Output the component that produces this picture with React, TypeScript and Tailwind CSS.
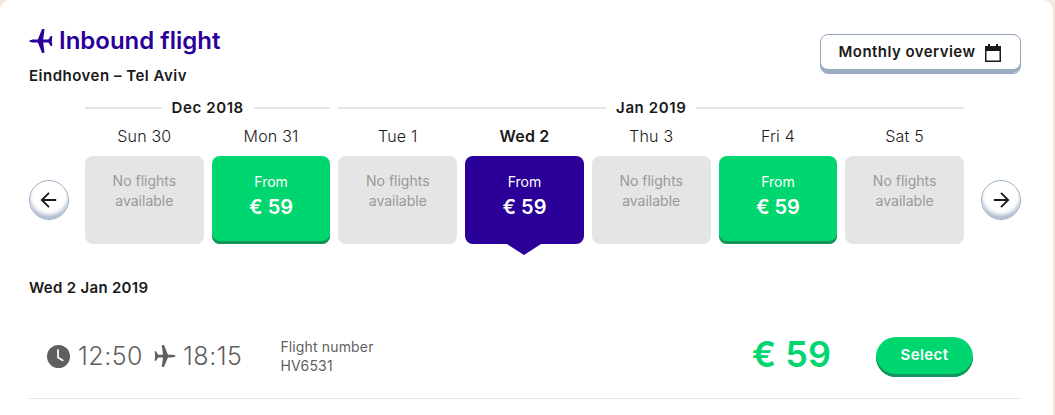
import React from 'react';

type Day = {
  label: string;
  kind: 'none' | 'open' | 'active';
};

const days: Day[] = [
  { label: 'Sun 30', kind: 'none' },
  { label: 'Mon 31', kind: 'open' },
  { label: 'Tue 1', kind: 'none' },
  { label: 'Wed 2', kind: 'active' },
  { label: 'Thu 3', kind: 'none' },
  { label: 'Fri 4', kind: 'open' },
  { label: 'Sat 5', kind: 'none' },
];

const PlaneIcon: React.FC<{ className: string }> = ({ className }) => (
  <svg viewBox="0 0 24 24" className={className} fill="currentColor">
    <path d="M0 12c1-1 3-1.500 5-1.500h3.800L13 .2c.2-.3 2.300-.3 2.500.2l-1.300 10.100h5.300l2.200-3.600h1.600L22.800 12l.5 5.100h-1.600l-2.200-3.600h-5.300l1.300 10.100c-.2.5-2.300.5-2.500.2L8.800 13.500H5c-2 0-4-.5-5-1.500z" />
  </svg>
);

const ArrowButton: React.FC<{ dir: 'left' | 'right' }> = ({ dir }) => (
  <button className="flex h-10 w-10 shrink-0 items-center justify-center rounded-full border border-[#9fb0c6] bg-white shadow-[inset_0_-5px_4px_-1px_#a9b8cb]">
    <svg viewBox="0 0 20 20" className="h-[18px] w-[18px] text-[#1a1a1a]" fill="none" stroke="currentColor" strokeWidth="2">
      {dir === 'left' ? <path d="M18 10H2M10 2l-8 8 8 8" /> : <path d="M2 10h16M10 2l8 8-8 8" />}
    </svg>
  </button>
);

const MonthLabel: React.FC<{ label: string; className: string }> = ({ label, className }) => (
  <div className={`flex items-center gap-[10px] ${className}`}>
    <div className="h-[2px] flex-1 bg-[#e5e5e5]" />
    <span className="text-[15px] font-semibold leading-5 tracking-[0.6px] text-[#1a1a1a]">{label}</span>
    <div className="h-[2px] flex-1 bg-[#e5e5e5]" />
  </div>
);

const DayCell: React.FC<{ day: Day }> = ({ day }) => {
  if (day.kind === 'none') {
    return (
      <div className="flex h-[88px] flex-col items-center rounded-lg bg-[#e5e5e5] pt-[15px] text-[14px] leading-5 text-[#999999]">
        <span>No flights</span>
        <span>available</span>
      </div>
    );
  }
  const active = day.kind === 'active';
  return (
    <div
      className={
        active
          ? 'relative flex h-[88px] flex-col items-center rounded-lg bg-[#2a0099] pt-4 text-white'
          : 'flex h-[88px] flex-col items-center rounded-lg bg-[#00d66f] pt-4 text-white shadow-[inset_0_-3px_0_#14935c]'
      }
    >
      <span className="text-[14px] leading-5">From</span>
      <span className="text-[20px] font-semibold leading-[30px]">€ 59</span>
      {active && (
        <div className="absolute left-1/2 top-full h-0 w-0 -translate-x-1/2 border-x-[17px] border-t-[11px] border-x-transparent border-t-[#2a0099]" />
      )}
    </div>
  );
};

export default function App() {
  return (
    <div className="h-[415px] w-[1055px] overflow-hidden bg-[#f6e7dd] font-['Inter',sans-serif]">
      <div className="h-full w-[1053px] rounded-t-[10px] bg-white pl-[29px] pr-[32px] pt-[25px]">
        <div className="flex items-start justify-between">
          <div>
            <h1 className="flex items-center gap-[6px] text-[24px] font-semibold leading-[32px] text-[#2a0099]">
              <PlaneIcon className="h-6 w-6" />
              Inbound flight
            </h1>
            <div className="mt-[9px] text-[15px] font-semibold leading-5 tracking-[0.5px] text-[#1a1a1a]">Eindhoven – Tel Aviv</div>
          </div>
          <button className="mt-[9px] flex h-10 w-[201px] items-center justify-center gap-[9px] rounded-lg border border-[#93a5bf] bg-white pb-[3px] text-[15px] font-semibold tracking-[0.45px] text-[#1a1a1a] shadow-[inset_0_-4px_0_#9cadc2]">
            Monthly overview
            <svg viewBox="0 0 18 18" className="h-[18px] w-[18px]" fill="#1a1a1a">
              <path d="M4 0h2v2h6V0h2v2h3v16H1V2h3zM2.500 7v9.500h13V7z" />
            </svg>
          </button>
        </div>

        <div className="mt-[12px] pl-[56px] pr-[57px]">
          <div className="grid grid-cols-7 gap-x-2">
            <MonthLabel label="Dec 2018" className="col-span-2" />
            <MonthLabel label="Jan 2019" className="col-span-5" />
          </div>
        </div>

        <div className="mt-[8px] flex items-start justify-between">
          <div className="w-10" />
          <div className="mr-px grid w-[879px] grid-cols-7 gap-x-2">
            {days.map(d => (
              <div key={d.label} className={`text-center text-[16px] leading-5 tracking-[0.2px] text-[#1a1a1a] ${d.kind === 'active' ? 'font-semibold' : 'font-light'}`}>
                {d.label}
              </div>
            ))}
          </div>
          <div className="w-10" />
        </div>

        <div className="mt-[10px] flex items-center justify-between">
          <ArrowButton dir="left" />
          <div className="mr-px grid w-[879px] grid-cols-7 gap-x-2">
            {days.map(d => (
              <DayCell key={d.label} day={d} />
            ))}
          </div>
          <ArrowButton dir="right" />
        </div>

        <div className="mt-[34px] text-[15px] font-semibold leading-5 tracking-[0.3px] text-[#1a1a1a]">Wed 2 Jan 2019</div>

        <div className="mt-[27px] flex h-[74px] items-start border-b border-[#e5e5e5] pl-[18px] pr-[48px]">
          <div className="mt-[15px] flex items-center text-[25px] font-light leading-8 tracking-[0.5px] text-[#5f5f5f]">
            <svg viewBox="0 0 24 24" className="mr-2 h-[23px] w-[23px]">
              <circle cx="12" cy="12" r="12" fill="#5f5f5f" />
              <path d="M11.500 4.500V13l5.500 3.500" fill="none" stroke="#fff" strokeWidth="1.800" />
            </svg>
            <span>12:50</span>
            <PlaneIcon className="ml-[11px] mr-[7px] h-[22px] w-[22px] -scale-x-100" />
            <span>18:15</span>
          </div>
          <div className="ml-[38px] mt-[12px] text-[14px] leading-[19px] tracking-[0.15px] text-[#5f5f5f]">
            <div>Flight number</div>
            <div>HV6531</div>
          </div>
          <div className="ml-auto mt-[7px] text-[36px] font-semibold leading-[44px] text-[#00d66f]">€ 59</div>
          <button className="ml-[45px] mt-[12px] h-10 w-[97px] rounded-full bg-[#00d66f] pb-[3px] text-[15px] font-semibold tracking-[0.4px] text-white shadow-[inset_0_-3px_0_#14935c]">
            Select
          </button>
        </div>
      </div>
    </div>
  );
}
